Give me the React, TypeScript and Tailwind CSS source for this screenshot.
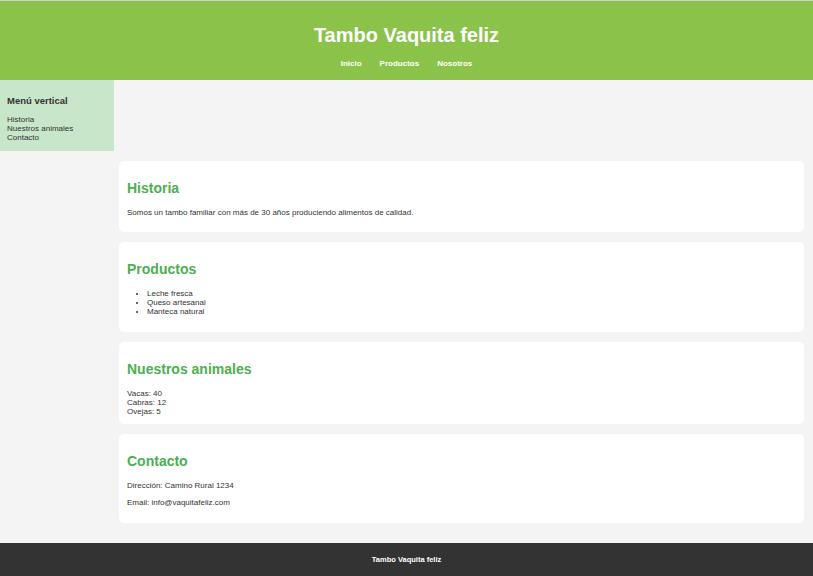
const secciones = ["Historia", "Nuestros animales", "Contacto"];

const Card = ({ title, children }: { title: string; children: React.ReactNode }) => (
  <section className="bg-white rounded-[5px] pt-2 px-2 pb-2">
    <h2 className="text-[14px] leading-[17px] font-bold text-[#4caf50] mt-[11px] mb-[11px]">{title}</h2>
    {children}
  </section>
);

export default function App() {
  return (
    <div className="min-h-[576px] bg-[#f4f4f4] text-[#333] font-['Liberation_Sans',Arial,sans-serif] flex flex-col">
      <header className="bg-[#8bc34a] border-t border-[#cfcfcf] pt-[22px] pb-[11px] text-white text-center">
        <h1 className="text-[20px] leading-[24px] font-bold">Tambo Vaquita feliz</h1>
        <nav className="mt-3 flex justify-center gap-[18px] text-[8px] leading-[10px] font-bold">
          <a href="#">Inicio</a>
          <a href="#">Productos</a>
          <a href="#">Nosotros</a>
        </nav>
      </header>

      <div className="flex flex-1">
        <aside className="w-[114px] shrink-0 self-start bg-[#c8e6c9] pt-[15px] px-[7px] pb-[9px]">
          <h3 className="text-[9.5px] leading-[11px] font-bold mb-[9px]">Menú vertical</h3>
          <ul className="text-[8px] leading-[9px]">
            {secciones.map((s) => (
              <li key={s}>
                <a href="#">{s}</a>
              </li>
            ))}
          </ul>
        </aside>

        <main className="flex-1 pt-[81px] pl-[5px] pr-[9px] pb-5 flex flex-col gap-[10px] text-[8px] leading-[9px]">
          <Card title="Historia">
            <p className="mb-[7px]">Somos un tambo familiar con más de 30 años produciendo alimentos de calidad.</p>
          </Card>
          <Card title="Productos">
            <ul className="list-disc pl-5 mb-2">
              <li>Leche fresca</li>
              <li>Queso artesanal</li>
              <li>Manteca natural</li>
            </ul>
          </Card>
          <Card title="Nuestros animales">
            <div>
              Vacas: 40
              <br />
              Cabras: 12
              <br />
              Ovejas: 5
            </div>
          </Card>
          <Card title="Contacto">
            <p className="mb-2">Dirección: Camino Rural 1234</p>
            <p className="mb-2">Email: info@vaquitafeliz.com</p>
          </Card>
        </main>
      </div>

      <footer className="bg-[#333] text-white text-center font-bold text-[7.5px] leading-[9px] py-3">
        Tambo Vaquita feliz
      </footer>
    </div>
  );
}
